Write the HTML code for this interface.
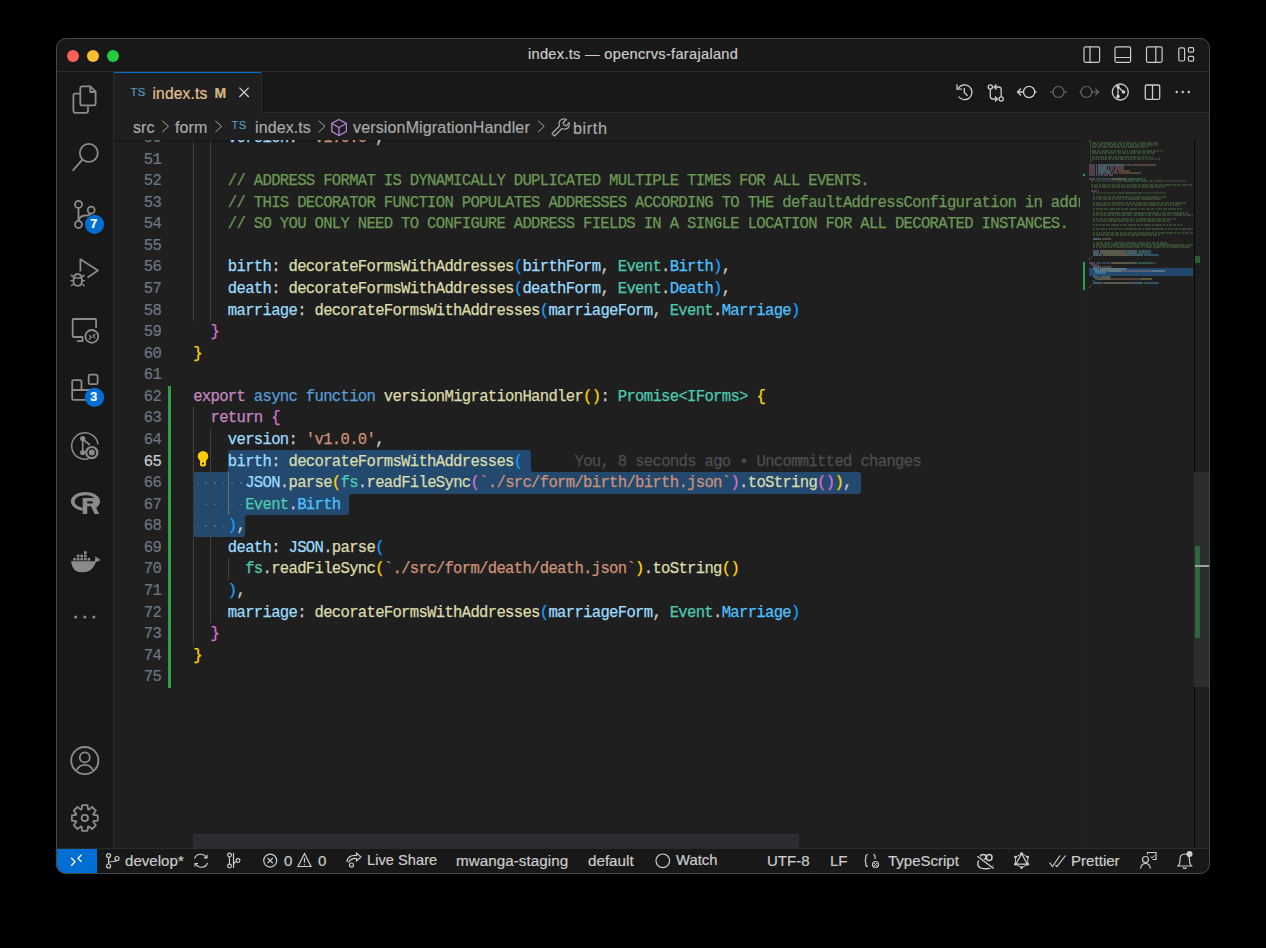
<!DOCTYPE html><html><head><meta charset="utf-8"><style>
*{margin:0;padding:0;box-sizing:border-box}
html,body{width:1266px;height:948px;background:#000;overflow:hidden;font-family:"Liberation Sans",sans-serif}
#clip{position:absolute;left:0;top:0;width:1266px;height:948px;clip-path:inset(38px 56px 74px 56px round 10px);background:#1f1f1f}
.r{position:absolute}
.cl{position:absolute;left:193.2px;white-space:pre;font-family:"Liberation Mono",monospace;font-size:15.6px;letter-spacing:-0.6944px;height:21.567px;line-height:21.567px;color:#cccccc;-webkit-text-stroke:0.25px currentColor}
.ln{position:absolute;left:98.5px;-webkit-text-stroke:0.2px currentColor;width:62.694px;text-align:right;font-family:"Liberation Mono",monospace;font-size:15.6px;letter-spacing:-0.6944px;height:21.567px;line-height:21.567px}
.ui{position:absolute;white-space:pre;color:#cccccc;line-height:1;-webkit-text-stroke:0.2px currentColor}
svg{position:absolute;left:0;top:0;overflow:visible}
</style></head><body><div id="clip">
<div class="r" style="left:56px;top:38px;width:1154px;height:33px;background:#181818"></div>
<div class="r" style="left:56px;top:71px;width:1154px;height:1px;background:#2b2b2b"></div>
<div class="r" style="left:56px;top:72px;width:57px;height:776px;background:#181818"></div>
<div class="r" style="left:113px;top:72px;width:1px;height:776px;background:#2b2b2b"></div>
<div class="r" style="left:114px;top:72px;width:1096px;height:41px;background:#181818"></div>
<div class="r" style="left:262px;top:112px;width:948px;height:1px;background:#2b2b2b"></div>
<div class="r" style="left:114px;top:72px;width:147px;height:41px;background:#1f1f1f"></div>
<div class="r" style="left:114px;top:72px;width:147px;height:1px;background:#006ed2"></div>
<div class="r" style="left:261px;top:72px;width:1px;height:41px;background:#2b2b2b"></div>
<div class="r" style="left:56px;top:848px;width:1154px;height:1px;background:#2b2b2b"></div>
<div class="r" style="left:56px;top:849px;width:1154px;height:25px;background:#181818"></div>
<div class="r" style="left:56px;top:849px;width:41px;height:25px;background:#006ed2"></div>
<div class="r" style="left:227.87px;top:450.04px;width:303.34px;height:22.57px;background:#23496f;border-radius:3px 3px 0 0"></div>
<div class="r" style="left:193.20px;top:472.11px;width:667.36px;height:21.57px;background:#23496f;border-radius:3px 3px 3px 0"></div>
<div class="r" style="left:193.20px;top:493.17px;width:156.01px;height:22.07px;background:#23496f;border-radius:0 0 3px 0"></div>
<div class="r" style="left:193.20px;top:514.74px;width:52.00px;height:22.07px;background:#23496f;border-radius:0 0 3px 3px"></div>
<div class="r" style="left:224.87px;top:469.11px;width:3.00px;height:3.00px;background:#23496f;"></div>
<div class="r" style="left:224.87px;top:469.11px;width:3.00px;height:3.00px;background:#1f1f1f;border-bottom-right-radius:3px"></div>
<div class="r" style="left:531.21px;top:469.11px;width:3.00px;height:3.00px;background:#23496f;"></div>
<div class="r" style="left:531.21px;top:469.11px;width:3.00px;height:3.00px;background:#1f1f1f;border-bottom-left-radius:3px"></div>
<div class="r" style="left:349.21px;top:493.67px;width:3.00px;height:3.00px;background:#23496f;"></div>
<div class="r" style="left:349.21px;top:493.67px;width:3.00px;height:3.00px;background:#1f1f1f;border-top-left-radius:3px"></div>
<div class="r" style="left:245.20px;top:515.24px;width:3.00px;height:3.00px;background:#23496f;"></div>
<div class="r" style="left:245.20px;top:515.24px;width:3.00px;height:3.00px;background:#1f1f1f;border-top-left-radius:3px"></div>
<div class="r" style="left:196.73px;top:482.09px;width:1.60px;height:1.60px;background:#50647e;"></div>
<div class="r" style="left:205.40px;top:482.09px;width:1.60px;height:1.60px;background:#50647e;"></div>
<div class="r" style="left:214.07px;top:482.09px;width:1.60px;height:1.60px;background:#50647e;"></div>
<div class="r" style="left:222.73px;top:482.09px;width:1.60px;height:1.60px;background:#50647e;"></div>
<div class="r" style="left:231.40px;top:482.09px;width:1.60px;height:1.60px;background:#50647e;"></div>
<div class="r" style="left:240.07px;top:482.09px;width:1.60px;height:1.60px;background:#50647e;"></div>
<div class="r" style="left:196.73px;top:503.66px;width:1.60px;height:1.60px;background:#50647e;"></div>
<div class="r" style="left:205.40px;top:503.66px;width:1.60px;height:1.60px;background:#50647e;"></div>
<div class="r" style="left:214.07px;top:503.66px;width:1.60px;height:1.60px;background:#50647e;"></div>
<div class="r" style="left:222.73px;top:503.66px;width:1.60px;height:1.60px;background:#50647e;"></div>
<div class="r" style="left:231.40px;top:503.66px;width:1.60px;height:1.60px;background:#50647e;"></div>
<div class="r" style="left:240.07px;top:503.66px;width:1.60px;height:1.60px;background:#50647e;"></div>
<div class="r" style="left:196.73px;top:525.22px;width:1.60px;height:1.60px;background:#50647e;"></div>
<div class="r" style="left:205.40px;top:525.22px;width:1.60px;height:1.60px;background:#50647e;"></div>
<div class="r" style="left:214.07px;top:525.22px;width:1.60px;height:1.60px;background:#50647e;"></div>
<div class="r" style="left:222.73px;top:525.22px;width:1.60px;height:1.60px;background:#50647e;"></div>
<div class="r" style="left:193.00px;top:127.03px;width:1.00px;height:194.10px;background:#404040;"></div>
<div class="r" style="left:210.00px;top:127.03px;width:1.00px;height:194.10px;background:#404040;"></div>
<div class="r" style="left:193.00px;top:407.40px;width:1.00px;height:237.24px;background:#404040;"></div>
<div class="r" style="left:210.00px;top:428.97px;width:1.00px;height:194.10px;background:#404040;"></div>
<div class="r" style="left:228.00px;top:472.11px;width:1.00px;height:43.13px;background:#707070;"></div>
<div class="r" style="left:228.00px;top:558.37px;width:1.00px;height:21.57px;background:#404040;"></div>
<div class="r" style="left:168.00px;top:385.84px;width:3.00px;height:301.94px;background:#2ea043;"></div>
<div class="r" style="left:193.00px;top:834.00px;width:606.00px;height:14.00px;background:#2c2d31;"></div>
<div class="r" style="left:114px;top:140px;width:967px;height:3px;background:linear-gradient(#0005,#0000)"></div>
<div class="ln" style="top:128.033px;color:#6e7681">50</div>
<div class="ln" style="top:149.600px;color:#6e7681">51</div>
<div class="ln" style="top:171.167px;color:#6e7681">52</div>
<div class="ln" style="top:192.734px;color:#6e7681">53</div>
<div class="ln" style="top:214.301px;color:#6e7681">54</div>
<div class="ln" style="top:235.868px;color:#6e7681">55</div>
<div class="ln" style="top:257.435px;color:#6e7681">56</div>
<div class="ln" style="top:279.002px;color:#6e7681">57</div>
<div class="ln" style="top:300.569px;color:#6e7681">58</div>
<div class="ln" style="top:322.136px;color:#6e7681">59</div>
<div class="ln" style="top:343.703px;color:#6e7681">60</div>
<div class="ln" style="top:365.270px;color:#6e7681">61</div>
<div class="ln" style="top:386.837px;color:#6e7681">62</div>
<div class="ln" style="top:408.404px;color:#6e7681">63</div>
<div class="ln" style="top:429.971px;color:#6e7681">64</div>
<div class="ln" style="top:451.538px;color:#cccccc">65</div>
<div class="ln" style="top:473.105px;color:#6e7681">66</div>
<div class="ln" style="top:494.672px;color:#6e7681">67</div>
<div class="ln" style="top:516.239px;color:#6e7681">68</div>
<div class="ln" style="top:537.806px;color:#6e7681">69</div>
<div class="ln" style="top:559.373px;color:#6e7681">70</div>
<div class="ln" style="top:580.940px;color:#6e7681">71</div>
<div class="ln" style="top:602.507px;color:#6e7681">72</div>
<div class="ln" style="top:624.074px;color:#6e7681">73</div>
<div class="ln" style="top:645.641px;color:#6e7681">74</div>
<div class="ln" style="top:667.208px;color:#6e7681">75</div>
<div class="cl" style="top:128.033px"><span style="color:#cccccc">    </span><span style="color:#9cdcfe">version</span><span style="color:#cccccc">: </span><span style="color:#ce9178">&#x27;v1.0.0&#x27;</span><span style="color:#cccccc">,</span></div>
<div class="cl" style="top:149.600px"></div>
<div class="cl" style="top:171.167px"><span style="color:#6a9955">    // ADDRESS FORMAT IS DYNAMICALLY DUPLICATED MULTIPLE TIMES FOR ALL EVENTS.</span></div>
<div class="cl" style="top:192.734px"><span style="color:#6a9955">    // THIS DECORATOR FUNCTION POPULATES ADDRESSES ACCORDING TO THE defaultAddressConfiguration in address-utils.ts</span></div>
<div class="cl" style="top:214.301px"><span style="color:#6a9955">    // SO YOU ONLY NEED TO CONFIGURE ADDRESS FIELDS IN A SINGLE LOCATION FOR ALL DECORATED INSTANCES.</span></div>
<div class="cl" style="top:235.868px"></div>
<div class="cl" style="top:257.435px"><span style="color:#cccccc">    </span><span style="color:#9cdcfe">birth</span><span style="color:#cccccc">: </span><span style="color:#dcdcaa">decorateFormsWithAddresses</span><span style="color:#179fff">(</span><span style="color:#9cdcfe">birthForm</span><span style="color:#cccccc">, </span><span style="color:#4ec9b0">Event</span><span style="color:#cccccc">.</span><span style="color:#4fc1ff">Birth</span><span style="color:#179fff">)</span><span style="color:#cccccc">,</span></div>
<div class="cl" style="top:279.002px"><span style="color:#cccccc">    </span><span style="color:#9cdcfe">death</span><span style="color:#cccccc">: </span><span style="color:#dcdcaa">decorateFormsWithAddresses</span><span style="color:#179fff">(</span><span style="color:#9cdcfe">deathForm</span><span style="color:#cccccc">, </span><span style="color:#4ec9b0">Event</span><span style="color:#cccccc">.</span><span style="color:#4fc1ff">Death</span><span style="color:#179fff">)</span><span style="color:#cccccc">,</span></div>
<div class="cl" style="top:300.569px"><span style="color:#cccccc">    </span><span style="color:#9cdcfe">marriage</span><span style="color:#cccccc">: </span><span style="color:#dcdcaa">decorateFormsWithAddresses</span><span style="color:#179fff">(</span><span style="color:#9cdcfe">marriageForm</span><span style="color:#cccccc">, </span><span style="color:#4ec9b0">Event</span><span style="color:#cccccc">.</span><span style="color:#4fc1ff">Marriage</span><span style="color:#179fff">)</span></div>
<div class="cl" style="top:322.136px"><span style="color:#cccccc">  </span><span style="color:#da70d6">}</span></div>
<div class="cl" style="top:343.703px"><span style="color:#ffd700">}</span></div>
<div class="cl" style="top:365.270px"></div>
<div class="cl" style="top:386.837px"><span style="color:#c586c0">export</span><span style="color:#cccccc"> </span><span style="color:#569cd6">async</span><span style="color:#cccccc"> </span><span style="color:#569cd6">function</span><span style="color:#cccccc"> </span><span style="color:#dcdcaa">versionMigrationHandler</span><span style="color:#ffd700">()</span><span style="color:#cccccc">: </span><span style="color:#4ec9b0">Promise</span><span style="color:#4ec9b0">&lt;</span><span style="color:#4ec9b0">IForms</span><span style="color:#4ec9b0">&gt;</span><span style="color:#cccccc"> </span><span style="color:#ffd700">{</span></div>
<div class="cl" style="top:408.404px"><span style="color:#cccccc">  </span><span style="color:#c586c0">return</span><span style="color:#cccccc"> </span><span style="color:#da70d6">{</span></div>
<div class="cl" style="top:429.971px"><span style="color:#cccccc">    </span><span style="color:#9cdcfe">version</span><span style="color:#cccccc">: </span><span style="color:#ce9178">&#x27;v1.0.0&#x27;</span><span style="color:#cccccc">,</span></div>
<div class="cl" style="top:451.538px"><span style="color:#cccccc">    </span><span style="color:#9cdcfe">birth</span><span style="color:#cccccc">: </span><span style="color:#dcdcaa">decorateFormsWithAddresses</span><span style="color:#179fff">(</span></div>
<div class="cl" style="top:473.105px"><span style="color:#cccccc">      </span><span style="color:#9cdcfe">JSON</span><span style="color:#cccccc">.</span><span style="color:#dcdcaa">parse</span><span style="color:#ffd700">(</span><span style="color:#4ec9b0">fs</span><span style="color:#cccccc">.</span><span style="color:#dcdcaa">readFileSync</span><span style="color:#da70d6">(</span><span style="color:#ce9178">`./src/form/birth/birth.json`</span><span style="color:#da70d6">)</span><span style="color:#cccccc">.</span><span style="color:#dcdcaa">toString</span><span style="color:#da70d6">()</span><span style="color:#ffd700">)</span><span style="color:#cccccc">,</span></div>
<div class="cl" style="top:494.672px"><span style="color:#cccccc">      </span><span style="color:#4ec9b0">Event</span><span style="color:#cccccc">.</span><span style="color:#4fc1ff">Birth</span></div>
<div class="cl" style="top:516.239px"><span style="color:#cccccc">    </span><span style="color:#179fff">)</span><span style="color:#cccccc">,</span></div>
<div class="cl" style="top:537.806px"><span style="color:#cccccc">    </span><span style="color:#9cdcfe">death</span><span style="color:#cccccc">: </span><span style="color:#9cdcfe">JSON</span><span style="color:#cccccc">.</span><span style="color:#dcdcaa">parse</span><span style="color:#179fff">(</span></div>
<div class="cl" style="top:559.373px"><span style="color:#cccccc">      </span><span style="color:#4ec9b0">fs</span><span style="color:#cccccc">.</span><span style="color:#dcdcaa">readFileSync</span><span style="color:#ffd700">(</span><span style="color:#ce9178">`./src/form/death/death.json`</span><span style="color:#ffd700">)</span><span style="color:#cccccc">.</span><span style="color:#dcdcaa">toString</span><span style="color:#ffd700">()</span></div>
<div class="cl" style="top:580.940px"><span style="color:#cccccc">    </span><span style="color:#179fff">)</span><span style="color:#cccccc">,</span></div>
<div class="cl" style="top:602.507px"><span style="color:#cccccc">    </span><span style="color:#9cdcfe">marriage</span><span style="color:#cccccc">: </span><span style="color:#dcdcaa">decorateFormsWithAddresses</span><span style="color:#179fff">(</span><span style="color:#9cdcfe">marriageForm</span><span style="color:#cccccc">, </span><span style="color:#4ec9b0">Event</span><span style="color:#cccccc">.</span><span style="color:#4fc1ff">Marriage</span><span style="color:#179fff">)</span></div>
<div class="cl" style="top:624.074px"><span style="color:#cccccc">  </span><span style="color:#da70d6">}</span></div>
<div class="cl" style="top:645.641px"><span style="color:#ffd700">}</span></div>
<div class="cl" style="top:667.208px"></div>
<div class="cl" style="top:451.538px;left:574.55px;color:#4e4e4e">You, 8 seconds ago • Uncommitted changes</div>
<div class="r" style="left:114px;top:113px;width:1096px;height:27px;background:#1f1f1f"></div>
<div class="r" style="left:262px;top:112px;width:948px;height:1px;background:#2b2b2b"></div>
<div class="r" style="left:1081.00px;top:140.00px;width:128.00px;height:708.00px;background:#1f1f1f;"></div>
<svg width="1266" height="948"><rect x="1089" y="268" width="104" height="8" fill="#23496f"/><path d="M1089 140.25h2v1.5h-2zM1090 142.25h1v1.5h-1zM1092 142.25h4v1.5h-4zM1097 142.25h2v1.5h-2zM1100 142.25h12v1.5h-12zM1113 142.25h4v1.5h-4zM1118 142.25h4v1.5h-4zM1123 142.25h2v1.5h-2zM1126 142.25h6v1.5h-6zM1133 142.25h3v1.5h-3zM1137 142.25h1v1.5h-1zM1139 142.25h7v1.5h-7zM1147 142.25h6v1.5h-6zM1154 142.25h4v1.5h-4zM1090 144.25h1v1.5h-1zM1092 144.25h2v1.5h-2zM1095 144.25h3v1.5h-3zM1099 144.25h4v1.5h-4zM1104 144.25h2v1.5h-2zM1107 144.25h4v1.5h-4zM1112 144.25h4v1.5h-4zM1117 144.25h2v1.5h-2zM1120 144.25h2v1.5h-2zM1123 144.25h2v1.5h-2zM1126 144.25h3v1.5h-3zM1130 144.25h4v1.5h-4zM1135 144.25h4v1.5h-4zM1140 144.25h6v1.5h-6zM1147 144.25h6v1.5h-6zM1154 144.25h1v1.5h-1zM1156 144.25h2v1.5h-2zM1090 146.25h1v1.5h-1zM1092 146.25h4v1.5h-4zM1097 146.25h4v1.5h-4zM1102 146.25h6v1.5h-6zM1109 146.25h4v1.5h-4zM1114 146.25h6v1.5h-6zM1121 146.25h6v1.5h-6zM1128 146.25h12v1.5h-12zM1141 146.25h4v1.5h-4zM1146 146.25h2v1.5h-2zM1090 148.25h1v1.5h-1zM1090 150.25h1v1.5h-1zM1092 150.25h4v1.5h-4zM1097 150.25h3v1.5h-3zM1101 150.25h8v1.5h-8zM1110 150.25h2v1.5h-2zM1113 150.25h3v1.5h-3zM1117 150.25h4v1.5h-4zM1122 150.25h2v1.5h-2zM1125 150.25h3v1.5h-3zM1129 150.25h1v1.5h-1zM1131 150.25h6v1.5h-6zM1138 150.25h3v1.5h-3zM1142 150.25h3v1.5h-3zM1146 150.25h6v1.5h-6zM1153 150.25h3v1.5h-3zM1157 150.25h2v1.5h-2zM1160 150.25h1v1.5h-1zM1162 150.25h1v1.5h-1zM1090 152.25h1v1.5h-1zM1092 152.25h6v1.5h-6zM1099 152.25h4v1.5h-4zM1104 152.25h3v1.5h-3zM1108 152.25h7v1.5h-7zM1116 152.25h1v1.5h-1zM1118 152.25h3v1.5h-3zM1122 152.25h4v1.5h-4zM1127 152.25h2v1.5h-2zM1130 152.25h6v1.5h-6zM1137 152.25h4v1.5h-4zM1142 152.25h4v1.5h-4zM1147 152.25h3v1.5h-3zM1151 152.25h4v1.5h-4zM1090 154.25h1v1.5h-1zM1090 156.25h1v1.5h-1zM1092 156.25h3v1.5h-3zM1096 156.25h3v1.5h-3zM1100 156.25h4v1.5h-4zM1105 156.25h2v1.5h-2zM1108 156.25h4v1.5h-4zM1113 156.25h4v1.5h-4zM1118 156.25h6v1.5h-6zM1125 156.25h4v1.5h-4zM1130 156.25h7v1.5h-7zM1138 156.25h3v1.5h-3zM1142 156.25h2v1.5h-2zM1145 156.25h3v1.5h-3zM1149 156.25h2v1.5h-2zM1152 156.25h1v1.5h-1zM1090 158.25h1v1.5h-1zM1092 158.25h2v1.5h-2zM1095 158.25h2v1.5h-2zM1098 158.25h2v1.5h-2zM1101 158.25h6v1.5h-6zM1108 158.25h3v1.5h-3zM1112 158.25h2v1.5h-2zM1115 158.25h4v1.5h-4zM1120 158.25h4v1.5h-4zM1125 158.25h2v1.5h-2zM1128 158.25h4v1.5h-4zM1133 158.25h3v1.5h-3zM1137 158.25h4v1.5h-4zM1142 158.25h2v1.5h-2zM1145 158.25h1v1.5h-1zM1147 158.25h2v1.5h-2zM1150 158.25h4v1.5h-4zM1155 158.25h2v1.5h-2zM1158 158.25h2v1.5h-2zM1090 160.25h2v1.5h-2zM1091 180.25h2v1.5h-2zM1117 180.25h5v1.5h-5zM1123 180.25h12v1.5h-12zM1136 180.25h4v1.5h-4zM1141 180.25h7v1.5h-7zM1149 180.25h3v1.5h-3zM1153 180.25h2v1.5h-2zM1156 180.25h7v1.5h-7zM1091 184.25h2v1.5h-2zM1094 184.25h4v1.5h-4zM1099 184.25h2v1.5h-2zM1102 184.25h4v1.5h-4zM1107 184.25h4v1.5h-4zM1112 184.25h4v1.5h-4zM1117 184.25h3v1.5h-3zM1121 184.25h2v1.5h-2zM1124 184.25h2v1.5h-2zM1127 184.25h3v1.5h-3zM1131 184.25h6v1.5h-6zM1138 184.25h3v1.5h-3zM1142 184.25h6v1.5h-6zM1149 184.25h4v1.5h-4zM1154 184.25h4v1.5h-4zM1159 184.25h4v1.5h-4zM1164 184.25h7v1.5h-7zM1172 184.25h4v1.5h-4zM1177 184.25h4v1.5h-4zM1182 184.25h6v1.5h-6zM1189 184.25h3v1.5h-3zM1091 186.25h2v1.5h-2zM1094 186.25h4v1.5h-4zM1099 186.25h2v1.5h-2zM1102 186.25h6v1.5h-6zM1109 186.25h2v1.5h-2zM1112 186.25h3v1.5h-3zM1116 186.25h4v1.5h-4zM1121 186.25h4v1.5h-4zM1126 186.25h3v1.5h-3zM1130 186.25h2v1.5h-2zM1133 186.25h4v1.5h-4zM1138 186.25h2v1.5h-2zM1141 186.25h4v1.5h-4zM1146 186.25h3v1.5h-3zM1150 186.25h4v1.5h-4zM1155 186.25h6v1.5h-6zM1162 186.25h3v1.5h-3zM1093 192.25h2v1.5h-2zM1119 192.25h5v1.5h-5zM1125 192.25h12v1.5h-12zM1138 192.25h4v1.5h-4zM1093 196.25h2v1.5h-2zM1096 196.25h6v1.5h-6zM1103 196.25h4v1.5h-4zM1108 196.25h3v1.5h-3zM1112 196.25h4v1.5h-4zM1117 196.25h12v1.5h-12zM1130 196.25h3v1.5h-3zM1134 196.25h7v1.5h-7zM1142 196.25h3v1.5h-3zM1146 196.25h4v1.5h-4zM1151 196.25h7v1.5h-7zM1159 196.25h2v1.5h-2zM1162 196.25h4v1.5h-4zM1093 198.25h2v1.5h-2zM1096 198.25h1v1.5h-1zM1098 198.25h4v1.5h-4zM1103 198.25h4v1.5h-4zM1108 198.25h3v1.5h-3zM1112 198.25h2v1.5h-2zM1115 198.25h3v1.5h-3zM1119 198.25h2v1.5h-2zM1122 198.25h2v1.5h-2zM1125 198.25h2v1.5h-2zM1128 198.25h12v1.5h-12zM1141 198.25h12v1.5h-12zM1154 198.25h7v1.5h-7zM1093 202.25h2v1.5h-2zM1096 202.25h4v1.5h-4zM1101 202.25h2v1.5h-2zM1104 202.25h2v1.5h-2zM1107 202.25h4v1.5h-4zM1112 202.25h12v1.5h-12zM1125 202.25h3v1.5h-3zM1129 202.25h3v1.5h-3zM1133 202.25h2v1.5h-2zM1136 202.25h6v1.5h-6zM1143 202.25h4v1.5h-4zM1148 202.25h8v1.5h-8zM1157 202.25h3v1.5h-3zM1161 202.25h3v1.5h-3zM1165 202.25h4v1.5h-4zM1170 202.25h4v1.5h-4zM1175 202.25h7v1.5h-7zM1183 202.25h3v1.5h-3zM1093 204.25h2v1.5h-2zM1096 204.25h12v1.5h-12zM1109 204.25h2v1.5h-2zM1112 204.25h2v1.5h-2zM1115 204.25h2v1.5h-2zM1118 204.25h2v1.5h-2zM1121 204.25h2v1.5h-2zM1124 204.25h2v1.5h-2zM1127 204.25h3v1.5h-3zM1131 204.25h2v1.5h-2zM1134 204.25h3v1.5h-3zM1138 204.25h4v1.5h-4zM1143 204.25h6v1.5h-6zM1150 204.25h6v1.5h-6zM1157 204.25h2v1.5h-2zM1160 204.25h3v1.5h-3zM1164 204.25h3v1.5h-3zM1168 204.25h3v1.5h-3zM1172 204.25h2v1.5h-2zM1175 204.25h4v1.5h-4zM1180 204.25h1v1.5h-1zM1093 208.25h2v1.5h-2zM1096 208.25h7v1.5h-7zM1104 208.25h4v1.5h-4zM1109 208.25h6v1.5h-6zM1116 208.25h4v1.5h-4zM1121 208.25h2v1.5h-2zM1124 208.25h4v1.5h-4zM1129 208.25h8v1.5h-8zM1138 208.25h2v1.5h-2zM1141 208.25h4v1.5h-4zM1146 208.25h4v1.5h-4zM1151 208.25h3v1.5h-3zM1155 208.25h2v1.5h-2zM1158 208.25h4v1.5h-4zM1163 208.25h4v1.5h-4zM1168 208.25h8v1.5h-8zM1177 208.25h2v1.5h-2zM1180 208.25h2v1.5h-2zM1093 212.25h2v1.5h-2zM1096 212.25h3v1.5h-3zM1100 212.25h3v1.5h-3zM1104 212.25h3v1.5h-3zM1108 212.25h12v1.5h-12zM1121 212.25h12v1.5h-12zM1134 212.25h12v1.5h-12zM1147 212.25h12v1.5h-12zM1160 212.25h1v1.5h-1zM1162 212.25h4v1.5h-4zM1167 212.25h4v1.5h-4zM1172 212.25h12v1.5h-12zM1185 212.25h3v1.5h-3zM1093 214.25h2v1.5h-2zM1096 214.25h3v1.5h-3zM1100 214.25h2v1.5h-2zM1103 214.25h3v1.5h-3zM1107 214.25h4v1.5h-4zM1112 214.25h2v1.5h-2zM1115 214.25h1v1.5h-1zM1117 214.25h4v1.5h-4zM1122 214.25h4v1.5h-4zM1127 214.25h4v1.5h-4zM1132 214.25h1v1.5h-1zM1134 214.25h3v1.5h-3zM1138 214.25h6v1.5h-6zM1145 214.25h2v1.5h-2zM1148 214.25h3v1.5h-3zM1152 214.25h1v1.5h-1zM1154 214.25h7v1.5h-7zM1162 214.25h4v1.5h-4zM1167 214.25h3v1.5h-3zM1171 214.25h2v1.5h-2zM1174 214.25h8v1.5h-8zM1183 214.25h3v1.5h-3zM1187 214.25h4v1.5h-4zM1192 214.25h1v1.5h-1zM1093 218.25h2v1.5h-2zM1096 218.25h2v1.5h-2zM1099 218.25h4v1.5h-4zM1104 218.25h3v1.5h-3zM1108 218.25h7v1.5h-7zM1116 218.25h4v1.5h-4zM1121 218.25h7v1.5h-7zM1129 218.25h4v1.5h-4zM1134 218.25h1v1.5h-1zM1136 218.25h1v1.5h-1zM1138 218.25h8v1.5h-8zM1147 218.25h4v1.5h-4zM1152 218.25h4v1.5h-4zM1157 218.25h4v1.5h-4zM1162 218.25h4v1.5h-4zM1167 218.25h3v1.5h-3zM1171 218.25h2v1.5h-2zM1174 218.25h2v1.5h-2zM1093 220.25h2v1.5h-2zM1096 220.25h1v1.5h-1zM1098 220.25h2v1.5h-2zM1101 220.25h4v1.5h-4zM1106 220.25h2v1.5h-2zM1109 220.25h3v1.5h-3zM1113 220.25h4v1.5h-4zM1118 220.25h6v1.5h-6zM1125 220.25h4v1.5h-4zM1130 220.25h2v1.5h-2zM1133 220.25h2v1.5h-2zM1136 220.25h3v1.5h-3zM1140 220.25h3v1.5h-3zM1144 220.25h2v1.5h-2zM1147 220.25h7v1.5h-7zM1155 220.25h2v1.5h-2zM1158 220.25h4v1.5h-4zM1163 220.25h3v1.5h-3zM1167 220.25h3v1.5h-3zM1093 224.25h2v1.5h-2zM1096 224.25h2v1.5h-2zM1099 224.25h2v1.5h-2zM1102 224.25h3v1.5h-3zM1106 224.25h4v1.5h-4zM1111 224.25h8v1.5h-8zM1120 224.25h2v1.5h-2zM1123 224.25h4v1.5h-4zM1128 224.25h8v1.5h-8zM1137 224.25h3v1.5h-3zM1141 224.25h2v1.5h-2zM1144 224.25h7v1.5h-7zM1152 224.25h2v1.5h-2zM1155 224.25h7v1.5h-7zM1163 224.25h2v1.5h-2zM1166 224.25h2v1.5h-2zM1169 224.25h3v1.5h-3zM1173 224.25h3v1.5h-3zM1177 224.25h2v1.5h-2zM1180 224.25h2v1.5h-2zM1093 228.25h2v1.5h-2zM1096 228.25h4v1.5h-4zM1101 228.25h4v1.5h-4zM1106 228.25h2v1.5h-2zM1109 228.25h4v1.5h-4zM1114 228.25h3v1.5h-3zM1118 228.25h3v1.5h-3zM1122 228.25h2v1.5h-2zM1125 228.25h8v1.5h-8zM1134 228.25h3v1.5h-3zM1138 228.25h3v1.5h-3zM1142 228.25h2v1.5h-2zM1145 228.25h6v1.5h-6zM1152 228.25h12v1.5h-12zM1165 228.25h2v1.5h-2zM1168 228.25h3v1.5h-3zM1172 228.25h2v1.5h-2zM1175 228.25h3v1.5h-3zM1179 228.25h2v1.5h-2zM1182 228.25h4v1.5h-4zM1187 228.25h6v1.5h-6zM1093 232.25h2v1.5h-2zM1096 232.25h2v1.5h-2zM1099 232.25h3v1.5h-3zM1103 232.25h3v1.5h-3zM1107 232.25h3v1.5h-3zM1111 232.25h3v1.5h-3zM1115 232.25h4v1.5h-4zM1120 232.25h3v1.5h-3zM1124 232.25h3v1.5h-3zM1128 232.25h4v1.5h-4zM1133 232.25h4v1.5h-4zM1138 232.25h7v1.5h-7zM1146 232.25h4v1.5h-4zM1151 232.25h3v1.5h-3zM1155 232.25h2v1.5h-2zM1158 232.25h7v1.5h-7zM1166 232.25h7v1.5h-7zM1174 232.25h2v1.5h-2zM1177 232.25h2v1.5h-2zM1180 232.25h1v1.5h-1zM1182 232.25h2v1.5h-2zM1185 232.25h4v1.5h-4zM1190 232.25h3v1.5h-3zM1093 234.25h2v1.5h-2zM1096 234.25h4v1.5h-4zM1101 234.25h3v1.5h-3zM1105 234.25h4v1.5h-4zM1110 234.25h4v1.5h-4zM1115 234.25h4v1.5h-4zM1120 234.25h6v1.5h-6zM1127 234.25h3v1.5h-3zM1131 234.25h4v1.5h-4zM1136 234.25h4v1.5h-4zM1141 234.25h7v1.5h-7zM1149 234.25h3v1.5h-3zM1153 234.25h4v1.5h-4zM1158 234.25h2v1.5h-2zM1093 242.25h2v1.5h-2zM1096 242.25h7v1.5h-7zM1104 242.25h6v1.5h-6zM1111 242.25h2v1.5h-2zM1114 242.25h11v1.5h-11zM1126 242.25h10v1.5h-10zM1137 242.25h8v1.5h-8zM1146 242.25h5v1.5h-5zM1152 242.25h3v1.5h-3zM1156 242.25h3v1.5h-3zM1160 242.25h7v1.5h-7zM1093 244.25h2v1.5h-2zM1096 244.25h4v1.5h-4zM1101 244.25h9v1.5h-9zM1111 244.25h8v1.5h-8zM1120 244.25h9v1.5h-9zM1130 244.25h9v1.5h-9zM1140 244.25h9v1.5h-9zM1150 244.25h2v1.5h-2zM1153 244.25h3v1.5h-3zM1157 244.25h27v1.5h-27zM1185 244.25h2v1.5h-2zM1188 244.25h5v1.5h-5zM1093 246.25h2v1.5h-2zM1096 246.25h2v1.5h-2zM1099 246.25h3v1.5h-3zM1103 246.25h4v1.5h-4zM1108 246.25h4v1.5h-4zM1113 246.25h2v1.5h-2zM1116 246.25h9v1.5h-9zM1126 246.25h7v1.5h-7zM1134 246.25h6v1.5h-6zM1141 246.25h2v1.5h-2zM1144 246.25h1v1.5h-1zM1146 246.25h6v1.5h-6zM1153 246.25h8v1.5h-8zM1162 246.25h3v1.5h-3zM1166 246.25h3v1.5h-3zM1170 246.25h9v1.5h-9zM1180 246.25h10v1.5h-10z" fill="#6a9955" opacity="0.42"/><path d="M1089 164.25h6v1.5h-6zM1127 164.25h4v1.5h-4zM1089 166.25h6v1.5h-6zM1110 166.25h4v1.5h-4zM1089 168.25h6v1.5h-6zM1110 168.25h4v1.5h-4zM1089 170.25h6v1.5h-6zM1113 170.25h4v1.5h-4zM1089 172.25h6v1.5h-6zM1114 172.25h4v1.5h-4zM1089 174.25h6v1.5h-6zM1098 174.25h2v1.5h-2zM1104 174.25h4v1.5h-4zM1089 178.25h6v1.5h-6zM1091 190.25h6v1.5h-6zM1089 262.25h6v1.5h-6zM1091 264.25h6v1.5h-6z" fill="#c586c0" opacity="0.42"/><path d="M1096 164.25h1v1.5h-1zM1125 164.25h1v1.5h-1zM1096 166.25h1v1.5h-1zM1108 166.25h1v1.5h-1zM1096 168.25h1v1.5h-1zM1108 168.25h1v1.5h-1zM1096 170.25h1v1.5h-1zM1111 170.25h1v1.5h-1zM1096 172.25h1v1.5h-1zM1104 172.25h1v1.5h-1zM1112 172.25h1v1.5h-1zM1096 174.25h1v1.5h-1zM1124 178.25h3v1.5h-3zM1100 238.25h1v1.5h-1zM1110 238.25h1v1.5h-1zM1098 250.25h1v1.5h-1zM1136 250.25h1v1.5h-1zM1143 250.25h1v1.5h-1zM1150 250.25h1v1.5h-1zM1098 252.25h1v1.5h-1zM1136 252.25h1v1.5h-1zM1143 252.25h1v1.5h-1zM1150 252.25h1v1.5h-1zM1101 254.25h1v1.5h-1zM1142 254.25h1v1.5h-1zM1149 254.25h1v1.5h-1zM1134 262.25h3v1.5h-3zM1100 266.25h1v1.5h-1zM1110 266.25h1v1.5h-1zM1098 268.25h1v1.5h-1zM1099 270.25h1v1.5h-1zM1108 270.25h1v1.5h-1zM1152 270.25h1v1.5h-1zM1161 270.25h4v1.5h-4zM1100 272.25h1v1.5h-1zM1098 276.25h1v1.5h-1zM1104 276.25h1v1.5h-1zM1097 278.25h1v1.5h-1zM1141 278.25h1v1.5h-1zM1101 282.25h1v1.5h-1zM1142 282.25h1v1.5h-1zM1149 282.25h1v1.5h-1z" fill="#cccccc" opacity="0.42"/><path d="M1098 164.25h26v1.5h-26zM1098 166.25h9v1.5h-9zM1098 168.25h9v1.5h-9zM1098 170.25h12v1.5h-12zM1098 172.25h6v1.5h-6zM1106 172.25h5v1.5h-5zM1101 174.25h2v1.5h-2zM1093 238.25h7v1.5h-7zM1093 250.25h5v1.5h-5zM1127 250.25h9v1.5h-9zM1093 252.25h5v1.5h-5zM1127 252.25h9v1.5h-9zM1093 254.25h8v1.5h-8zM1130 254.25h12v1.5h-12zM1093 266.25h7v1.5h-7zM1093 268.25h5v1.5h-5zM1095 270.25h4v1.5h-4zM1093 276.25h5v1.5h-5zM1100 276.25h4v1.5h-4zM1093 282.25h8v1.5h-8zM1130 282.25h12v1.5h-12z" fill="#9cdcfe" opacity="0.42"/><path d="M1132 164.25h24v1.5h-24zM1115 166.25h9v1.5h-9zM1115 168.25h9v1.5h-9zM1118 170.25h12v1.5h-12zM1119 172.25h22v1.5h-22zM1109 174.25h4v1.5h-4zM1102 238.25h8v1.5h-8zM1102 266.25h8v1.5h-8zM1121 270.25h31v1.5h-31zM1110 278.25h31v1.5h-31z" fill="#ce9178" opacity="0.42"/><path d="M1096 178.25h5v1.5h-5zM1102 178.25h8v1.5h-8zM1096 262.25h5v1.5h-5zM1102 262.25h8v1.5h-8z" fill="#569cd6" opacity="0.42"/><path d="M1111 178.25h13v1.5h-13zM1100 250.25h26v1.5h-26zM1100 252.25h26v1.5h-26zM1103 254.25h26v1.5h-26zM1111 262.25h23v1.5h-23zM1100 268.25h26v1.5h-26zM1100 270.25h5v1.5h-5zM1109 270.25h12v1.5h-12zM1153 270.25h8v1.5h-8zM1105 276.25h5v1.5h-5zM1098 278.25h12v1.5h-12zM1142 278.25h8v1.5h-8zM1103 282.25h26v1.5h-26z" fill="#dcdcaa" opacity="0.42"/><path d="M1128 178.25h15v1.5h-15zM1138 250.25h5v1.5h-5zM1138 252.25h5v1.5h-5zM1144 254.25h5v1.5h-5zM1138 262.25h15v1.5h-15zM1106 270.25h2v1.5h-2zM1095 272.25h5v1.5h-5zM1095 278.25h2v1.5h-2zM1144 282.25h5v1.5h-5z" fill="#4ec9b0" opacity="0.42"/><path d="M1144 178.25h1v1.5h-1zM1089 258.25h1v1.5h-1zM1154 262.25h1v1.5h-1zM1105 270.25h1v1.5h-1zM1150 278.25h2v1.5h-2zM1089 286.25h1v1.5h-1z" fill="#ffd700" opacity="0.42"/><path d="M1094 180.25h22v1.5h-22zM1164 180.25h23v1.5h-23zM1096 192.25h22v1.5h-22zM1143 192.25h23v1.5h-23z" fill="#6a9955" opacity="0.28"/><path d="M1098 190.25h1v1.5h-1zM1091 256.25h1v1.5h-1zM1098 264.25h1v1.5h-1zM1091 284.25h1v1.5h-1z" fill="#da70d6" opacity="0.42"/><path d="M1126 250.25h1v1.5h-1zM1149 250.25h1v1.5h-1zM1126 252.25h1v1.5h-1zM1149 252.25h1v1.5h-1zM1129 254.25h1v1.5h-1zM1158 254.25h1v1.5h-1zM1126 268.25h1v1.5h-1zM1093 274.25h2v1.5h-2zM1110 276.25h1v1.5h-1zM1093 280.25h2v1.5h-2zM1129 282.25h1v1.5h-1zM1158 282.25h1v1.5h-1z" fill="#179fff" opacity="0.42"/><path d="M1144 250.25h5v1.5h-5zM1144 252.25h5v1.5h-5zM1150 254.25h8v1.5h-8zM1101 272.25h5v1.5h-5zM1150 282.25h8v1.5h-8z" fill="#4fc1ff" opacity="0.42"/></svg>
<div class="r" style="left:1083.00px;top:174.00px;width:2.00px;height:2.00px;background:#2ea043;"></div>
<div class="r" style="left:1083.00px;top:262.00px;width:2.00px;height:28.00px;background:#2ea043;"></div>
<div class="r" style="left:1080.00px;top:143.00px;width:1.00px;height:705.00px;background:#232323;"></div>
<div class="r" style="left:1194.00px;top:140.00px;width:1.00px;height:708.00px;background:#010409;"></div>
<div class="r" style="left:1194.00px;top:472.00px;width:15.00px;height:215.00px;background:#2c2d31;"></div>
<div class="r" style="left:1195.00px;top:546.00px;width:5.00px;height:92.00px;background:#2ea04380;"></div>
<div class="r" style="left:1194.50px;top:565.00px;width:14.50px;height:2.00px;background:#a0a0a0;"></div>
<div class="r" style="left:1195.00px;top:256.00px;width:5.00px;height:7.00px;background:#2ea04380;"></div>
<div class="ui" style="left:528px;top:47px;font-size:14.6px;color:#cccccc;letter-spacing:0.3px;">index.ts — opencrvs-farajaland</div>
<div class="ui" style="left:152.5px;top:86px;font-size:15.6px;color:#e2c08d;letter-spacing:0.15px;">index.ts</div>
<div class="ui" style="left:214.5px;top:86px;font-size:14px;color:#d6b585;letter-spacing:0px;font-weight:bold">M</div>
<div class="ui" style="left:130.5px;top:86.8px;font-size:11.2px;color:#519aba;letter-spacing:0.3px;">TS</div>
<div class="ui" style="left:231.5px;top:119.8px;font-size:11.2px;color:#519aba;letter-spacing:0.3px;">TS</div>
<div class="ui" style="left:133px;top:120px;font-size:16px;color:#a9a9a9;letter-spacing:0.1px;">src</div>
<div class="ui" style="left:175px;top:120px;font-size:16px;color:#a9a9a9;letter-spacing:0.1px;">form</div>
<div class="ui" style="left:255px;top:120px;font-size:16px;color:#a9a9a9;letter-spacing:0.1px;">index.ts</div>
<div class="ui" style="left:353px;top:120px;font-size:16px;color:#a9a9a9;letter-spacing:0.15px;">versionMigrationHandler</div>
<div class="ui" style="left:573px;top:120px;font-size:16.2px;color:#a9a9a9;letter-spacing:0.6px;">birth</div>
<div class="ui" style="left:125px;top:853.2px;font-size:15px;color:#cccccc;letter-spacing:0.05px;">develop*</div>
<div class="ui" style="left:284px;top:853.2px;font-size:15px;color:#cccccc;letter-spacing:0px;">0</div>
<div class="ui" style="left:318px;top:853.2px;font-size:15px;color:#cccccc;letter-spacing:0px;">0</div>
<div class="ui" style="left:367px;top:853.2px;font-size:14.6px;color:#cccccc;letter-spacing:0.05px;">Live Share</div>
<div class="ui" style="left:456px;top:853.2px;font-size:15.2px;color:#cccccc;letter-spacing:0.05px;">mwanga-staging</div>
<div class="ui" style="left:588px;top:853.2px;font-size:15.2px;color:#cccccc;letter-spacing:0px;">default</div>
<div class="ui" style="left:676px;top:853.2px;font-size:14.8px;color:#cccccc;letter-spacing:0px;">Watch</div>
<div class="ui" style="left:767px;top:853.2px;font-size:15px;color:#cccccc;letter-spacing:0px;">UTF-8</div>
<div class="ui" style="left:830px;top:853.2px;font-size:15px;color:#cccccc;letter-spacing:0px;">LF</div>
<div class="ui" style="left:888px;top:853.2px;font-size:15px;color:#cccccc;letter-spacing:0px;">TypeScript</div>
<div class="ui" style="left:1071px;top:853.2px;font-size:15.1px;color:#cccccc;letter-spacing:0px;">Prettier</div>
<svg width="1266" height="948" viewBox="0 0 1266 948"><circle cx="73" cy="55.9" r="6" fill="#ff5f57"/><circle cx="93" cy="55.9" r="6" fill="#febc2e"/><circle cx="113" cy="55.9" r="6" fill="#28c840"/><g fill="none" stroke="#cccccc" stroke-width="1.2"><rect x="1084" y="46.8" width="15.6" height="15.5" rx="1.5"/><path d="M1090 47v15"/><rect x="1115" y="46.8" width="15.6" height="15.5" rx="1.5"/><path d="M1115 57.5h15.6"/><rect x="1146.5" y="46.8" width="15.6" height="15.5" rx="1.5"/><path d="M1155.8 47v15"/><rect x="1178.8" y="47.8" width="5.8" height="13.2" rx="1.5"/><rect x="1188.4" y="47.6" width="5.2" height="4.6" rx="1.2"/><rect x="1188.4" y="56.4" width="5.2" height="4.8" rx="1.2"/></g><g fill="none" stroke="#8b8b8b" stroke-width="1.8" stroke-linejoin="round"><path d="M80.3 93.7H75.4q-2 0-2 2V110.8q0 2 2 2H86q2 0 2-2V106.4"/><path d="M80.3 88.3q0-2 2-2H90.3L95.6 91.6V103.4q0 2-2 2H82.3q-2 0-2-2Z"/><path d="M90.3 86.3V92H95.6"/></g><g fill="none" stroke="#8b8b8b" stroke-width="1.8" stroke-linejoin="round"><circle cx="88.8" cy="152.9" r="9"/><path d="M82.2 159.8L73.2 170.2" stroke-linecap="round"/></g><g fill="none" stroke="#8b8b8b" stroke-width="1.8" stroke-linejoin="round"><circle cx="78.5" cy="204.4" r="3.5"/><circle cx="91.2" cy="210.1" r="3.5"/><circle cx="78.5" cy="224.4" r="3.5"/><path d="M78.5 208V221"/><path d="M78.5 220Q80 215.5 86 215.5Q89.5 215.5 90.5 213.5"/></g><g fill="none" stroke="#8b8b8b" stroke-width="1.8" stroke-linejoin="round"><path d="M80.4 271.5V259.3L98 270.5L87.5 277.5"/><path d="M73.5 280.5q0-6.5 4.2-6.5t4.2 6.5v0.5q0 4.8-4.2 4.8t-4.2-4.8z"/><path d="M73.5 278h8.4M71 275l2.5 1.8M84.5 275l-2.5 1.8M70.5 280.7h3M81.9 280.7h3M71 286l2.5-2M84.5 286l-2.5-2" stroke-width="1.6"/></g><g fill="none" stroke="#8b8b8b" stroke-width="1.8" stroke-linejoin="round"><path d="M96.1 328V320q0-1-1-1H73.7q-1 0-1 1V336q0 1 1 1H83"/><path d="M77 341.2H83.5M82.5 337V341"/><circle cx="91.8" cy="336.4" r="6.4"/><path d="M89 335.1L91.3 337.3L89 339.5M95.2 334L93 336.1L95.2 338.2" stroke-width="1.3" stroke-linejoin="miter"/></g><g fill="none" stroke="#8b8b8b" stroke-width="1.8" stroke-linejoin="round"><path d="M81.5 390V381.6Q81.5 380.1 80 380.1H73.7Q72.2 380.1 72.2 381.6V398.4Q72.2 399.9 73.7 399.9H91Q92.5 399.9 92.5 398.4V390H72.2"/><rect x="88.7" y="374.7" width="8.9" height="9.5" rx="1.5"/></g><g fill="none" stroke="#8b8b8b" stroke-width="1.5"><path d="M89 458.5A13.2 13.2 0 1 1 98 444.5"/></g><g fill="#8b8b8b"><circle cx="82.7" cy="438.6" r="2.6"/><circle cx="82.7" cy="452.6" r="2.6"/></g><g fill="none" stroke="#8b8b8b" stroke-width="1.6"><path d="M82.7 439V452.6M83 439.5L90 445"/><circle cx="91.8" cy="452.6" r="5.6" stroke-width="2.2"/></g><circle cx="91.8" cy="452.6" r="3" fill="#8b8b8b"/><g fill="#8b8b8b"><path fill-rule="evenodd" d="M85.4 491.9C93.5 491.9 100 496.1 100 501.3C100 504.8 97.3 507.8 93.3 509.4L91.5 506.2C94.5 505.2 96.3 503.4 96.3 501.4C96.3 497.9 91.5 495.2 85.4 495.2C79.3 495.2 74.6 498.1 74.6 501.5C74.6 504.2 77.5 506.6 82.7 507.7V510.7C75.8 509.8 70.9 506 70.9 501.3C70.9 496.1 77.4 491.9 85.4 491.9Z"/><path fill-rule="evenodd" d="M82.7 498H93.2Q97.6 498 97.6 501.6Q97.6 504.2 94.8 505L99.2 514H94.6L91 506.2H87.2V514H82.7ZM87.2 501.2V503.6H91.5Q93 503.6 93 502.4Q93 501.2 91.5 501.2Z"/></g><g fill="#8b8b8b"><path d="M71 561.3H94.5Q96 559 95 556.5Q97 556.2 97.7 558.6Q99.5 558.4 100.2 560Q98.5 561.8 96 561.7Q93 572.3 82 572.3Q72 572.3 71 561.3Z"/><rect x="73.2" y="557.9" width="2.6" height="2.6"/><rect x="76.8" y="557.9" width="2.6" height="2.6"/><rect x="80.4" y="557.9" width="2.6" height="2.6"/><rect x="84" y="557.9" width="2.6" height="2.6"/><rect x="87.6" y="557.9" width="2.6" height="2.6"/><rect x="76.8" y="554.6" width="2.6" height="2.6"/><rect x="80.4" y="554.6" width="2.6" height="2.6"/><rect x="84" y="554.6" width="2.6" height="2.6"/><rect x="84" y="551.3" width="2.6" height="2.6"/></g><g fill="#8b8b8b"><circle cx="75.7" cy="617" r="1.5"/><circle cx="84.8" cy="617" r="1.5"/><circle cx="93.9" cy="617" r="1.5"/></g><g fill="none" stroke="#8b8b8b" stroke-width="1.8" stroke-linejoin="round"><circle cx="84.8" cy="760.6" r="13.6"/><circle cx="84.8" cy="757.4" r="5"/><path d="M76.5 770.5Q79 764.8 84.8 764.8T93.1 770.5"/></g><g fill="none" stroke="#8b8b8b" stroke-width="1.8" stroke-linejoin="round"><path d="M81.56 809.39 L82.18 805.06 L87.42 805.06 L88.04 809.39 L88.60 809.62 L92.09 807.00 L95.80 810.71 L93.18 814.20 L93.41 814.76 L97.74 815.38 L97.74 820.62 L93.41 821.24 L93.18 821.80 L95.80 825.29 L92.09 829.00 L88.60 826.38 L88.04 826.61 L87.42 830.94 L82.18 830.94 L81.56 826.61 L81.00 826.38 L77.51 829.00 L73.80 825.29 L76.42 821.80 L76.19 821.24 L71.86 820.62 L71.86 815.38 L76.19 814.76 L76.42 814.20 L73.80 810.71 L77.51 807.00 L81.00 809.62Z"/><circle cx="84.8" cy="818" r="3.2"/></g><circle cx="94.5" cy="224.3" r="9.6" fill="#006ed2"/><circle cx="94.5" cy="397.4" r="9.6" fill="#006ed2"/><g fill="none" stroke="#cccccc" stroke-width="1.3"><path d="M958.2 88.5A7.4 7.4 0 1 1 958.5 96.5"/><path d="M957 84.3V89.2H961.9"/><path d="M964.3 88V92.5L967.6 95.8"/></g><g fill="none" stroke="#cccccc" stroke-width="1.3"><circle cx="990.3" cy="87" r="2.1"/><circle cx="1001.2" cy="99" r="2.1"/><path d="M990.3 89.1V96.5Q990.3 99 993 99H997"/><path d="M995 96.5L997.5 99L995 101.5"/><path d="M1001.2 96.9V89.5Q1001.2 87 998.5 87H994.5"/><path d="M996.5 84.5L994 87L996.5 89.5"/></g><g fill="none" stroke="#cccccc" stroke-width="1.3"><circle cx="1029.1" cy="92" r="5.6"/><path d="M1023.5 92H1017.5M1021 88.5L1017.5 92L1021 95.5M1034.7 92H1036.5"/></g><g fill="none" stroke="#6b6b6b" stroke-width="1.2"><circle cx="1058.5" cy="92" r="5.5"/><path d="M1053 92H1050M1064 92H1067"/></g><g fill="none" stroke="#6b6b6b" stroke-width="1.2"><circle cx="1086.4" cy="92" r="5.5"/><path d="M1080.9 92H1079.5M1091.9 92H1098.6M1095.3 88.7L1098.6 92L1095.3 95.3"/></g><g fill="none" stroke="#cccccc" stroke-width="1.3"><circle cx="1120.3" cy="92" r="8"/><path d="M1118 86.5V97.5M1118.3 87L1123 91.5"/></g><g fill="#cccccc"><circle cx="1118" cy="86.8" r="1.8"/><circle cx="1118" cy="96.6" r="1.8"/><circle cx="1123.5" cy="92" r="1.8"/></g><g fill="none" stroke="#cccccc" stroke-width="1.3"><rect x="1145.3" y="85" width="14.4" height="14.4" rx="1.5"/><path d="M1152.5 85V99.4"/></g><g fill="#cccccc"><circle cx="1176.7" cy="92" r="1.2"/><circle cx="1182.7" cy="92" r="1.2"/><circle cx="1188.8" cy="92" r="1.2"/></g><path d="M239.4 87.6L248.8 97M248.8 87.6L239.4 97" stroke="#cccccc" stroke-width="1.3"/><path d="M162.3 120.8L168.5 126.4L162.3 132" fill="none" stroke="#a9a9a9" stroke-width="1"/><path d="M215.4 120.8L221.6 126.4L215.4 132" fill="none" stroke="#a9a9a9" stroke-width="1"/><path d="M318.8 120.8L325.0 126.4L318.8 132" fill="none" stroke="#a9a9a9" stroke-width="1"/><path d="M538.1 120.8L544.3000000000001 126.4L538.1 132" fill="none" stroke="#a9a9a9" stroke-width="1"/><g fill="none" stroke="#b180d7" stroke-width="1.3"><path d="M339 119.5L346.3 123.5V131.5L339 135.5L331.8 131.5V123.5Z"/><path d="M331.8 123.5L339 127.5L346.3 123.5M339 127.5V135.5"/></g><path d="M552 133.5L559.5 126Q558 121.5 561.5 119.5Q564 118.3 566.5 119.5L563.2 122.5L564 125L566.5 125.8L569 122.5Q570 125.5 568.5 127.5Q566 130 562 128.5L554.5 136Z" fill="none" stroke="#a9a9a9" stroke-width="1.2" stroke-linejoin="round"/><g fill="#ffcc00"><circle cx="203" cy="456.3" r="5.3"/><path d="M200 459H206V464.5Q206 466.5 203 466.5Q200 466.5 200 464.5Z"/></g><circle cx="203" cy="463.5" r="1.1" fill="#1f1f1f"/><g fill="none" stroke="#ffffff" stroke-width="1.3"><path d="M71.2 857.8L75 861.8L71.2 865.8M81.5 854.8L78 858.3L81.5 861.8"/></g><g fill="none" stroke="#cccccc" stroke-width="1.2"><circle cx="108.6" cy="855.6" r="2"/><circle cx="108.6" cy="866" r="2"/><circle cx="117" cy="858.5" r="2"/><path d="M108.6 857.6V864M108.6 863Q109 861.5 113 861.5Q117 861 117 860.5"/></g><g fill="none" stroke="#cccccc" stroke-width="1.2"><path d="M194.5 858.5A6.5 6.5 0 0 1 206.5 858M207.5 863A6.5 6.5 0 0 1 195.5 863.5"/><path d="M204 857.8H207V854.8M198 863.5H195V866.5"/></g><g fill="none" stroke="#cccccc" stroke-width="1.2"><circle cx="229.5" cy="855" r="1.9"/><circle cx="229.5" cy="866" r="1.9"/><circle cx="238" cy="860.5" r="1.9"/><path d="M229.5 857V864M233.5 853V868M236 861.5Q234 862.5 233.5 865"/></g><g fill="none" stroke="#cccccc" stroke-width="1.2"><circle cx="270.2" cy="860.6" r="6.5"/><path d="M267.6 858L272.8 863.2M272.8 858L267.6 863.2"/></g><g fill="none" stroke="#cccccc" stroke-width="1.2"><path d="M304.5 853.6L311 866.5H298Z"/><path d="M304.5 858V862.8M304.5 864.2V865.2"/></g><g fill="none" stroke="#cccccc" stroke-width="1.2"><path d="M347 862Q347.5 855 356.5 855.5V853L361 857L356.5 861V858.5Q351 858 348.5 862.5"/><circle cx="351.5" cy="865" r="2"/></g><g fill="none" stroke="#cccccc" stroke-width="1.2"><circle cx="662.8" cy="860.8" r="6.8"/></g><g fill="none" stroke="#cccccc" stroke-width="1.2"><path d="M868 854.5Q865.8 854.5 865.8 856.5V858.5Q865.8 860.5 864.5 860.5Q865.8 860.5 865.8 862.5V864.5Q865.8 866.5 868 866.5M873 854.5Q875 854.5 875 856.5V859"/><circle cx="875.5" cy="864.5" r="3"/><path d="M874 863L877 866M877 863L874 866" stroke-width="1"/></g><g fill="none" stroke="#cccccc" stroke-width="1.5"><ellipse cx="983.2" cy="857" rx="2.9" ry="2.4"/><ellipse cx="989.2" cy="857.6" rx="2.8" ry="3"/><path d="M978.7 860.5Q977.6 862.5 977.8 864.5Q978.5 868.8 985.5 868.8Q991.5 868.8 993.2 865.5"/></g><path d="M977.3 856.2L993.7 868.5" stroke="#181818" stroke-width="3"/><path d="M977.3 856.2L993.7 868.5" stroke="#cccccc" stroke-width="1.4"/><g fill="none" stroke="#cccccc" stroke-width="1.2"><path d="M1021.6 853.6L1027.7 857.1V864.2L1021.6 867.6L1015.5 864.2V857.1Z" stroke-width="0.9"/><path d="M1021.6 853.6L1027.3 864.2H1015.9Z"/></g><g fill="#cccccc"><circle cx="1021.6" cy="853.6" r="1.4"/><circle cx="1027.7" cy="857.1" r="1.4"/><circle cx="1027.7" cy="864.2" r="1.4"/><circle cx="1021.6" cy="867.6" r="1.4"/><circle cx="1015.5" cy="864.2" r="1.4"/><circle cx="1015.5" cy="857.1" r="1.4"/></g><g fill="none" stroke="#cccccc" stroke-width="1.2"><path d="M1049.5 862.5L1052.5 866.5L1060 855.5M1055.5 865L1057 866.5L1065.5 855.5"/></g><g fill="none" stroke="#cccccc" stroke-width="1.2"><circle cx="1145.5" cy="859.5" r="3"/><path d="M1140.5 868.5Q1141.5 863.5 1145.5 863.5Q1149.5 863.5 1150.5 868.5M1147.5 854.5V852.5H1156V859.5H1152.5"/><path d="M1150.5 856.5L1152 858L1154.5 855.5" stroke-width="1"/></g><g fill="none" stroke="#cccccc" stroke-width="1.2"><path d="M1178 866H1191.5Q1189.5 864 1189.5 861V859.5Q1189.5 854 1184.7 854Q1180 854 1180 859.5V861Q1180 864 1178 866Z"/><path d="M1183 867.5Q1184.7 869.5 1186.5 867.5"/></g><circle cx="1189.5" cy="854" r="3" fill="#cccccc"/></svg>
<div class="ui" style="left:90.3px;top:218.2px;font-size:12.5px;color:#ffffff;letter-spacing:0px;font-weight:bold">7</div>
<div class="ui" style="left:90.3px;top:391.3px;font-size:12.5px;color:#ffffff;letter-spacing:0px;font-weight:bold">3</div>
</div>
<div class="r" style="left:56px;top:38px;width:1154px;height:836px;border:1px solid #464646;border-radius:10px"></div>
</body></html>
